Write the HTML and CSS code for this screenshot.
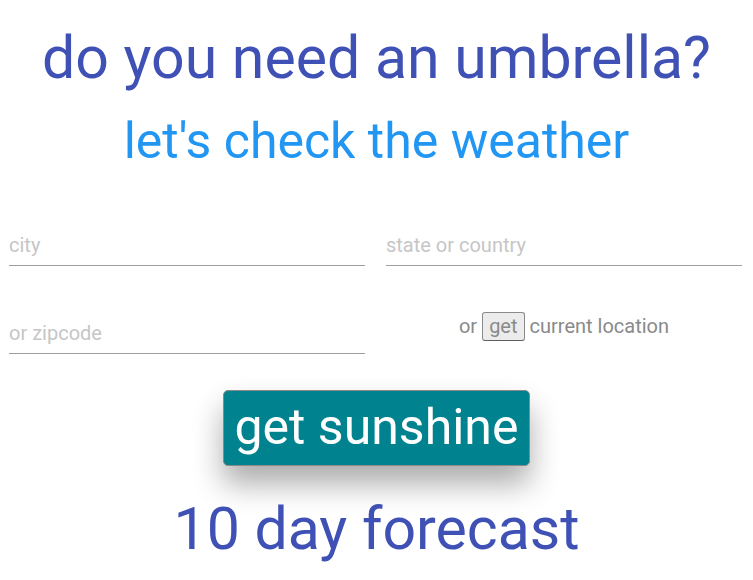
FILE: index.html
```html
<!DOCTYPE html>
<html>
<head>
<meta charset="utf-8">
<link rel="stylesheet" href="styles.css">
</head>
<body>
<main class="page">
  <h1 class="title">do you need an umbrella?</h1>
  <h2 class="subtitle">let's check the weather</h2>
  <form class="form">
    <div class="field"><input class="input" type="text" placeholder="city"></div>
    <div class="field"><input class="input" type="text" placeholder="state or country"></div>
    <div class="field"><input class="input" type="text" placeholder="or zipcode"></div>
    <div class="locate">or <button type="button" class="mini-btn">get</button> current location</div>
  </form>
  <div class="action"><button type="button" class="main-btn">get sunshine</button></div>
  <h2 class="forecast">10 day forecast</h2>
</main>
</body>
</html>
```
FILE: styles.css
```css
html, body {
  margin: 0;
  padding: 0;
  background: #fff;
}
body {
  font-family: Roboto, "Noto Sans", sans-serif;
}
.page {
  display: flex;
  flex-direction: column;
  align-items: center;
}
.title {
  margin: 23px 0 0;
  font-weight: 400;
  font-size: 59px;
  line-height: 70px;
  color: #3f51b5;
}
.subtitle {
  margin: 18px 0 0;
  font-weight: 400;
  font-size: 50px;
  line-height: 60px;
  color: #2196f3;
}
.form {
  align-self: stretch;
  display: grid;
  grid-template-columns: 356px 356px;
  column-gap: 21px;
  row-gap: 20px;
  margin: 27px 11px 0 9px;
}
.field {
  height: 68px;
  display: flex;
  align-items: flex-end;
}
.input {
  width: 100%;
  box-sizing: border-box;
  border: 0;
  border-bottom: 1px solid #9e9e9e;
  padding: 0 0 8px;
  font-family: Roboto, sans-serif;
  font-size: 20px;
  line-height: 24px;
  color: #333;
  outline: none;
  background: transparent;
}
.input::placeholder {
  color: #c6c6c6;
}
.locate {
  display: flex;
  align-items: center;
  justify-content: center;
  gap: 5px;
  font-size: 20px;
  color: #8a8a8a;
  padding-top: 12px;
}
.mini-btn {
  font-family: Roboto, sans-serif;
  font-size: 20px;
  color: #8a8a8a;
  background: #ececec;
  border: 1px solid #8a8a8a;
  border-bottom-color: #5e5e5e;
  border-radius: 3px;
  padding: 3px 6px 4px;
  line-height: 20px;
}
.action {
  margin-top: 36px;
}
.main-btn {
  font-family: Roboto, sans-serif;
  font-size: 50px;
  line-height: 58px;
  color: #fff;
  background: #00838f;
  border: 1px solid #8a8a8a;
  border-radius: 5px;
  padding: 7px 11px 9px;
  box-shadow: 0 18px 30px rgba(0,0,0,0.33);
}
.forecast {
  margin: 29px 0 0;
  font-weight: 400;
  font-size: 59px;
  line-height: 68px;
  color: #3f51b5;
}
```
